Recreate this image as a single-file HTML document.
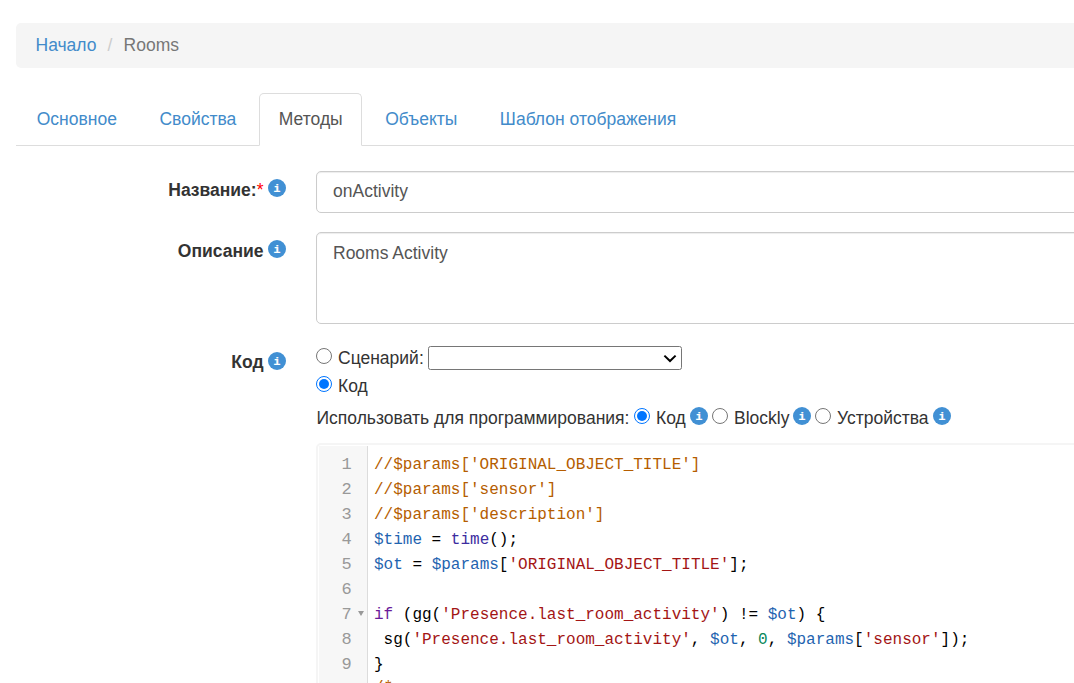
<!DOCTYPE html>
<html lang="ru">
<head>
<meta charset="utf-8">
<title>Rooms</title>
<style>
*{box-sizing:border-box}
html,body{margin:0;padding:0}
body{width:1074px;height:683px;overflow:hidden;background:#fff;color:#333;
 font-family:"Liberation Sans",Arial,sans-serif;font-size:17.5px;line-height:25px;position:relative}
a{color:#428bca;text-decoration:none}
.wrap{position:absolute;left:16px;top:0;width:1100px}
.breadcrumb{position:absolute;left:0;top:23px;width:1100px;height:45px;margin:0;padding:10px 0 10px 19.5px;
 background:#f5f5f5;border-radius:5px;list-style:none}
.breadcrumb li{display:inline-block}
.breadcrumb li+li:before{content:"/\00a0";padding:0 6.25px;color:#ccc}
.breadcrumb .active{color:#777}
.tabs{position:absolute;left:0;top:93px;width:1100px;height:53px;margin:0;padding:0 0 0 1px;list-style:none;border-bottom:1px solid #ddd}
.tabs li{float:left;margin-bottom:-1px}
.tabs li a{display:block;height:53px;padding:12.5px 18.75px;margin-right:3px;border:1px solid transparent;border-radius:5px 5px 0 0;line-height:25px}
.tabs li.active a{color:#555;background:#fff;border-color:#ddd;border-bottom-color:#fff}
.lbl{position:absolute;right:1074px;font-weight:bold;white-space:nowrap;text-align:right;line-height:25px}
.lbl .req{color:#f00;font-weight:normal}
.info{display:inline-block;width:18px;height:18px;vertical-align:-1px;margin-left:4px}
.info svg{display:block}
.fc{position:absolute;left:300px;width:800px;border:1px solid #ccc;border-radius:5px;background:#fff;
 box-shadow:inset 0 1px 1px rgba(0,0,0,.075);padding:7.5px 15px 7.5px 16px;color:#555;font-size:17.5px;line-height:25px}
.row{position:absolute;left:300px;white-space:nowrap;line-height:25px;color:#333}
.ab{position:absolute !important;white-space:nowrap;line-height:25px;margin:0 !important}
.radio{display:inline-block;width:16px;height:16px;border-radius:50%;border:1px solid #767676;background:#fff;vertical-align:-1px;position:relative}
.radio.on{border:1.5px solid #0075ff}
.radio.on:after{content:"";position:absolute;left:2px;top:2px;right:2px;bottom:2px;border-radius:50%;background:#0075ff}
.sel{display:inline-block;width:254px;height:24px;border:1px solid #767676;border-radius:2.5px;background:#fff;vertical-align:-6px;position:relative}
.sel svg{position:absolute;right:4.5px;top:7px}
.ace{position:absolute;left:300px;top:443px;width:800px;height:260px;border:2px solid #f5f5f5;border-radius:5px 0 0 0;background:#fff;
 font-family:"Liberation Mono","DejaVu Sans Mono",monospace;font-size:16px;line-height:25px;overflow:hidden}
.gutter{position:absolute;left:1.25px;top:1px;width:48.5px;height:100%;background:#f7f7f7;border-right:1px solid #dcdcdc;padding-top:6px;font-size:17px}
.gutter div{height:25px;text-align:right;padding-right:15px;color:#999;position:relative}
.gutter .fold:after{content:"";position:absolute;right:3.2px;top:9.2px;border:3.6px solid transparent;border-top:5.4px solid #999;border-bottom:0}
.code{position:absolute;left:56px;top:7.9px;white-space:pre;color:#000}
.code div{height:25px}
.c{color:#b55d00}.v{color:#1f64b0}.s{color:#a31515}.k{color:#6a1b9a}.f{color:#3c2ca0}.n{color:#09885a}
</style>
</head>
<body>
<div class="wrap">
 <ul class="breadcrumb">
  <li><a>Начало</a></li> <li class="active">Rooms</li>
 </ul>
 <ul class="tabs">
  <li><a>Основное</a></li>
  <li><a>Свойства</a></li>
  <li class="active"><a>Методы</a></li>
  <li><a>Объекты</a></li>
  <li><a>Шаблон отображения</a></li>
 </ul>

 <div class="lbl" style="right:830.5px;top:178px">Название:<span class="req">*</span><span class="info"><svg width="18" height="18" viewBox="0 0 18 18"><circle cx="9" cy="9" r="9" fill="#4190d4"/><text x="9" y="12.7" text-anchor="middle" font-family="Liberation Mono,monospace" font-weight="bold" font-size="11.5" fill="#fff" stroke="#fff" stroke-width="0.2">i</text></svg></span></div>
 <div class="fc" style="top:171px;height:42px;padding-top:6.5px">onActivity</div>

 <div class="lbl" style="right:830.5px;top:239px">Описание<span class="info"><svg width="18" height="18" viewBox="0 0 18 18"><circle cx="9" cy="9" r="9" fill="#4190d4"/><text x="9" y="12.7" text-anchor="middle" font-family="Liberation Mono,monospace" font-weight="bold" font-size="11.5" fill="#fff" stroke="#fff" stroke-width="0.2">i</text></svg></span></div>
 <div class="fc" style="top:232px;height:92px">Rooms Activity</div>

 <div class="lbl" style="right:830.5px;top:350px">Код<span class="info" style="position:relative;top:1px"><svg width="18" height="18" viewBox="0 0 18 18"><circle cx="9" cy="9" r="9" fill="#4190d4"/><text x="9" y="12.7" text-anchor="middle" font-family="Liberation Mono,monospace" font-weight="bold" font-size="11.5" fill="#fff" stroke="#fff" stroke-width="0.2">i</text></svg></span></div>

 <div class="rows">
  <span class="radio ab" style="left:300px;top:348px"></span><span class="ab" style="left:322px;top:346px">Сценарий:</span><span class="sel ab" style="left:412px;top:346px"><svg width="14" height="9" viewBox="0 0 14 9"><path d="M1.4 1.6l5.6 5.4 5.6-5.4" fill="none" stroke="#000" stroke-width="2"/></svg></span>
  <span class="radio ab on" style="left:300px;top:376px"></span><span class="ab" style="left:322px;top:374px">Код</span>
  <span class="ab" style="left:300.5px;top:406px">Использовать для программирования:</span><span class="radio ab on" style="left:618px;top:408px"></span><span class="ab" style="left:640px;top:406px">Код</span><span class="info ab" style="left:674px;top:407px"><svg width="18" height="18" viewBox="0 0 18 18"><circle cx="9" cy="9" r="9" fill="#4190d4"/><text x="9" y="12.7" text-anchor="middle" font-family="Liberation Mono,monospace" font-weight="bold" font-size="11.5" fill="#fff" stroke="#fff" stroke-width="0.2">i</text></svg></span><span class="radio ab" style="left:696px;top:408px"></span><span class="ab" style="left:718px;top:406px">Blockly</span><span class="info ab" style="left:777px;top:407px"><svg width="18" height="18" viewBox="0 0 18 18"><circle cx="9" cy="9" r="9" fill="#4190d4"/><text x="9" y="12.7" text-anchor="middle" font-family="Liberation Mono,monospace" font-weight="bold" font-size="11.5" fill="#fff" stroke="#fff" stroke-width="0.2">i</text></svg></span><span class="radio ab" style="left:799px;top:408px"></span><span class="ab" style="left:821px;top:406px">Устройства</span><span class="info ab" style="left:917px;top:407px"><svg width="18" height="18" viewBox="0 0 18 18"><circle cx="9" cy="9" r="9" fill="#4190d4"/><text x="9" y="12.7" text-anchor="middle" font-family="Liberation Mono,monospace" font-weight="bold" font-size="11.5" fill="#fff" stroke="#fff" stroke-width="0.2">i</text></svg></span>
 </div>

 <div class="ace">
  <div class="gutter"><div>1</div><div>2</div><div>3</div><div>4</div><div>5</div><div>6</div><div class="fold">7</div><div>8</div><div>9</div><div class="fold">10</div></div>
  <div class="code"><div><span class="c">//$params['ORIGINAL_OBJECT_TITLE']</span></div><div><span class="c">//$params['sensor']</span></div><div><span class="c">//$params['description']</span></div><div><span class="v">$time</span> = <span class="f">time</span>();</div><div><span class="v">$ot</span> = <span class="v">$params</span>[<span class="s">'ORIGINAL_OBJECT_TITLE'</span>];</div><div></div><div><span class="k">if</span> (gg(<span class="s">'Presence.last_room_activity'</span>) != <span class="v">$ot</span>) {</div><div> sg(<span class="s">'Presence.last_room_activity'</span>, <span class="v">$ot</span>, <span class="n">0</span>, <span class="v">$params</span>[<span class="s">'sensor'</span>]);</div><div>}</div><div style="position:relative;top:-1.5px"><span class="c">/*</span></div></div>
 </div>
</div>
</body>
</html>
